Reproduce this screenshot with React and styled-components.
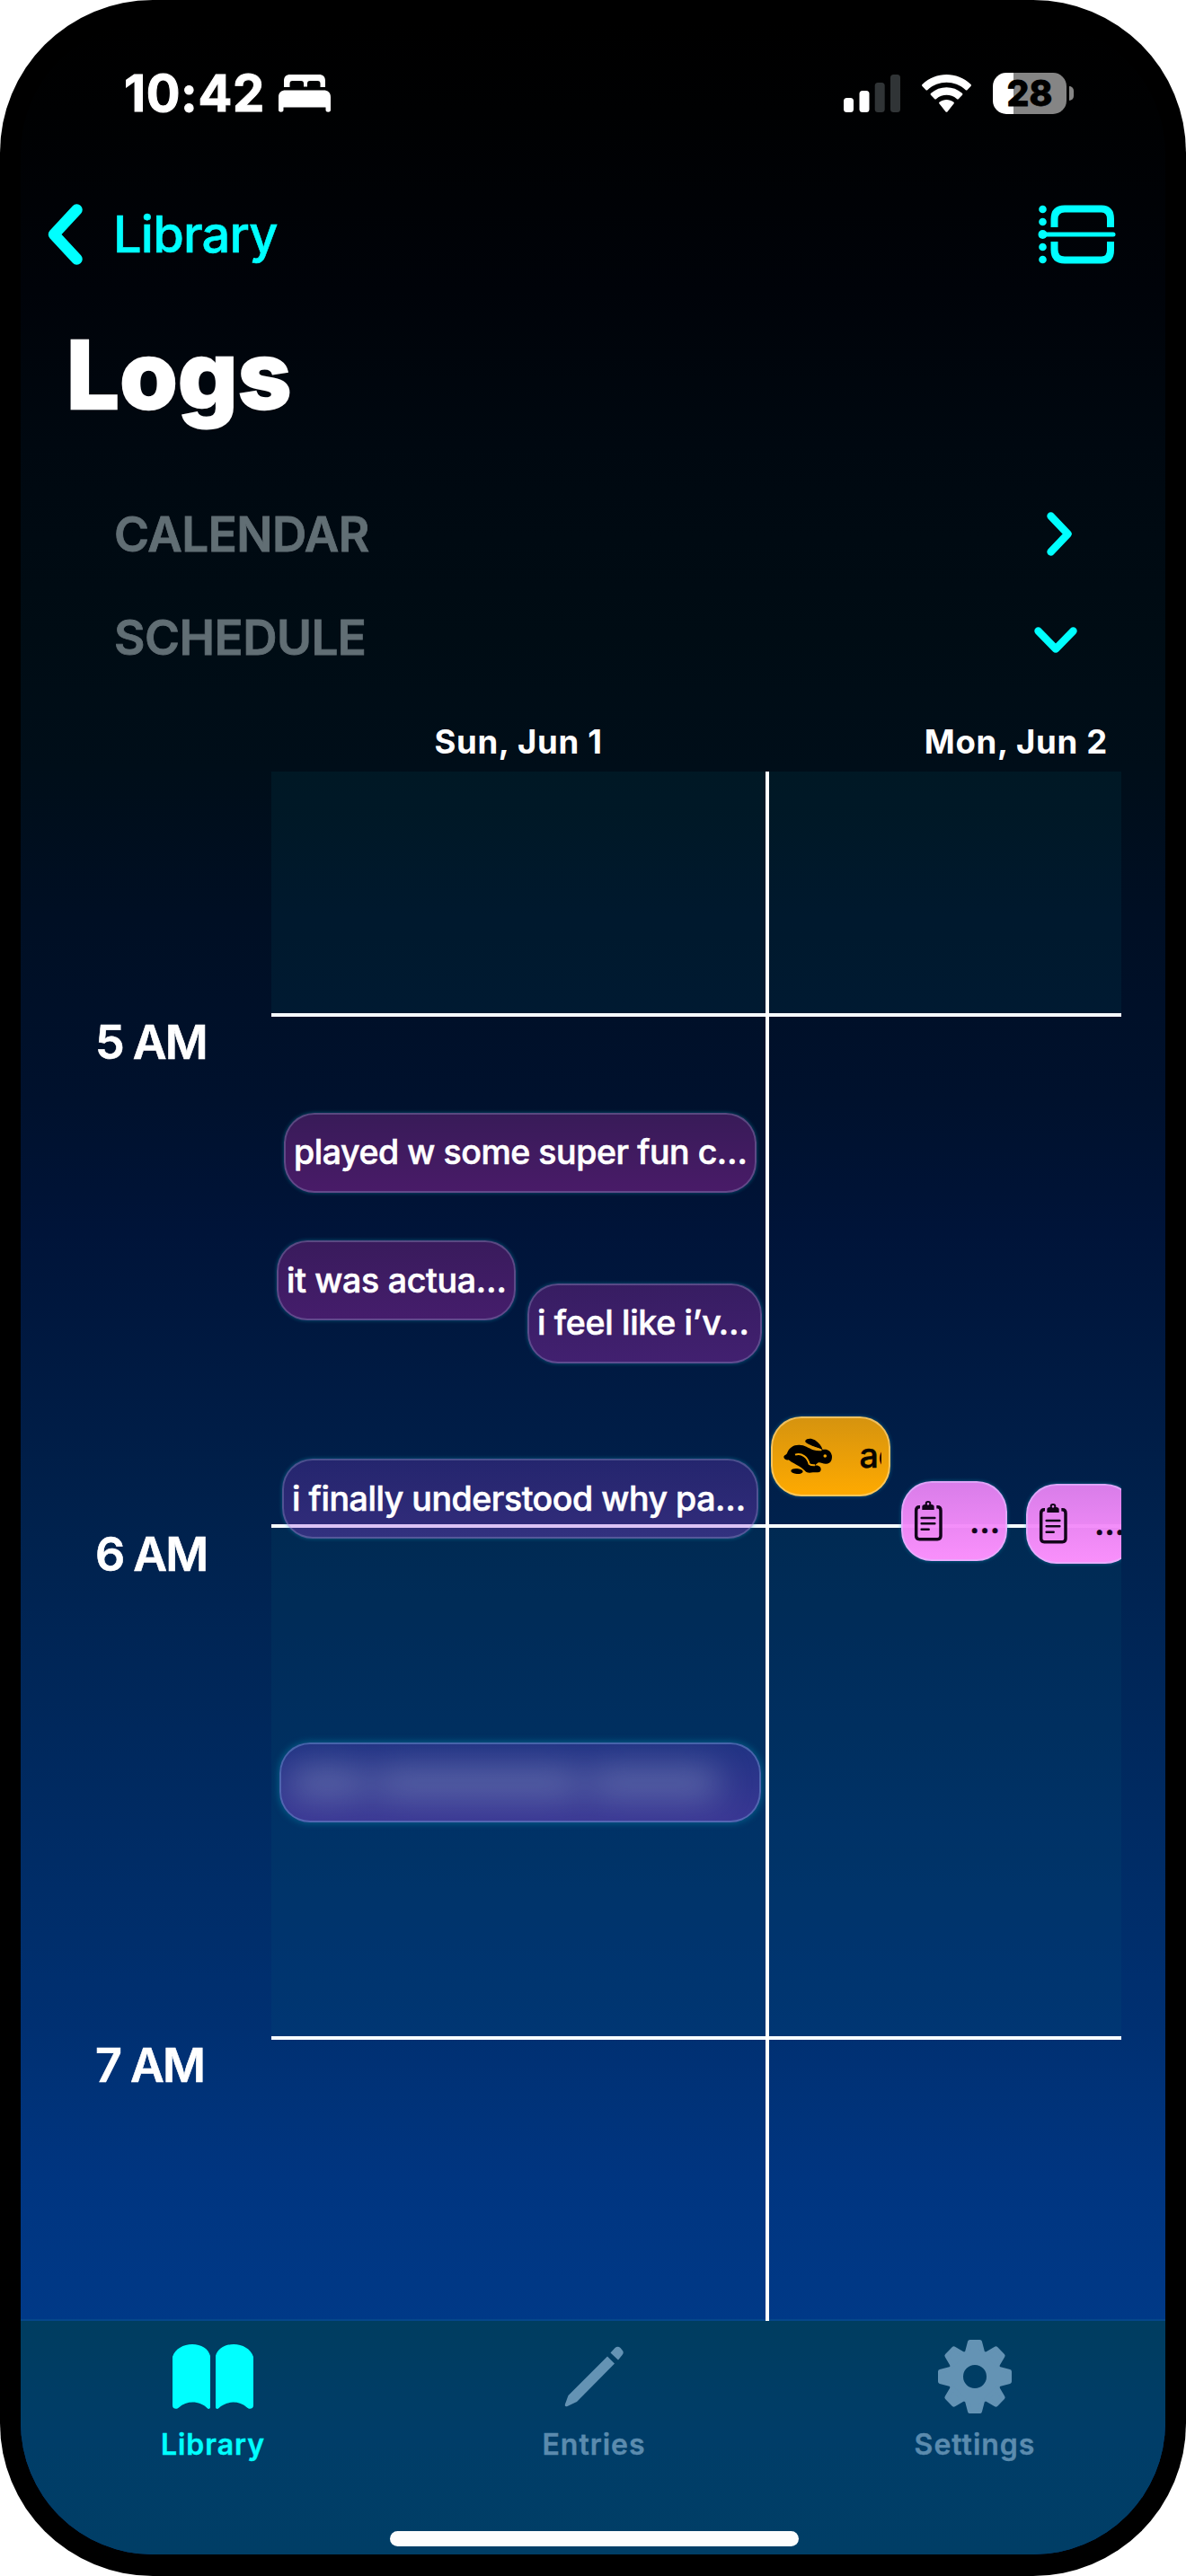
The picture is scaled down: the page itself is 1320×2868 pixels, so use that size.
import React from 'react';
import styled, { createGlobalStyle } from 'styled-components';

const GlobalStyle = createGlobalStyle`
  * { box-sizing: border-box; }
  html, body { margin: 0; padding: 0; background: #fff; }
  body { font-family: Inter, "Liberation Sans", sans-serif; color: #fff; }
  svg { display: block; flex: none; overflow: visible; }
`;

const CYAN = '#00ffff';
const MUTED = '#6493b4';

const Device = styled.div`
  width: 1320px;
  height: 2868px;
  padding: 24px 23px;
  background: #000;
  border-radius: 170px;
  overflow: hidden;
`;

const Screen = styled.div`
  height: 2820px;
  display: flex;
  flex-direction: column;
  overflow: hidden;
  border-radius: 147px;
  background: linear-gradient(
    180deg,
    #000000 0px, #000102 100px, #000309 300px, #000810 470px, #000c14 680px,
    #000e19 830px, #000f24 1000px, #00112d 1200px, #001439 1350px, #001a42 1500px,
    #00224e 1690px, #00285c 1900px, #002d68 2080px, #003072 2240px, #003580 2400px, #003987 2560px
  );
`;

const StatusBar = styled.div`
  height: 160px;
  padding: 0 102px 0 115px;
  display: flex;
  align-items: center;
`;

const Clock = styled.span`
  font-size: 56px;
  font-weight: 700;
  line-height: 68px;
  letter-spacing: 0.6px;
  -webkit-text-stroke: 1px #fff;
  width: 172px;
`;

const StatusIcons = styled.div`
  margin-left: auto;
  display: flex;
  align-items: center;
  gap: 24px;
`;

const Battery = styled.div`
  display: flex;
  align-items: center;
  gap: 3px;
`;

const BatteryBody = styled.div`
  width: 82px;
  height: 46px;
  border-radius: 15px;
  background: linear-gradient(90deg, #fff 23px, #858585 23px);
  color: #000;
  font-size: 39px;
  font-weight: 800;
  line-height: 46px;
  text-align: center;
  -webkit-text-stroke: 0.8px #000;
`;

const BatteryCap = styled.div`
  width: 5px;
  height: 16px;
  border-radius: 0 6px 6px 0;
  background: #858585;
`;

const NavBar = styled.div`
  height: 153px;
  padding: 0 55px 0 30px;
  display: flex;
  align-items: center;
  justify-content: space-between;
`;

const BackLink = styled.div`
  display: flex;
  align-items: center;
  gap: 34px;
  color: ${CYAN};
  font-size: 56px;
  font-weight: 500;
  line-height: 68px;
  letter-spacing: -0.8px;
  -webkit-text-stroke: 0.6px ${CYAN};
`;

const Title = styled.h1`
  margin: 0;
  height: 200px;
  padding: 17px 0 0 51px;
  font-size: 104px;
  font-weight: 800;
  line-height: 126px;
  letter-spacing: 0.4px;
  -webkit-text-stroke: 2.5px #fff;
`;

const SectionRow = styled.div`
  height: 115px;
  padding: 0 ${(p) => p.$right}px 0 104px;
  display: flex;
  align-items: center;
  justify-content: space-between;
  color: #616e74;
  font-size: 53px;
  font-weight: 600;
  line-height: 64px;
  letter-spacing: -0.5px;
  -webkit-text-stroke: 0.8px #616e74;
`;

const DayHeader = styled.div`
  height: 92px;
  padding: 0 49px 11px 279px;
  display: flex;
  align-items: flex-end;
`;

const Day = styled.div`
  width: ${(p) => p.$width}px;
  text-align: ${(p) => p.$align};
  padding-right: ${(p) => p.$pad || 0}px;
  font-size: 36.5px;
  font-weight: 700;
  line-height: 44px;
  letter-spacing: 0.7px;
`;

const Schedule = styled.div`
  height: 1723px;
  display: flex;
`;

const Hours = styled.div`
  width: 279px;
  padding: 271px 0 0 83px;
  overflow: hidden;
`;

const HourLabel = styled.div`
  height: 569.5px;
  font-size: 52px;
  font-weight: 600;
  line-height: 62px;
  letter-spacing: -2px;
  -webkit-text-stroke: 0.6px #fff;
`;

const Canvas = styled.div`
  position: relative;
  width: 946px;
  height: 1725px;
  overflow: hidden;
`;

const HourBlock = styled.div`
  height: ${(p) => p.$height}px;
  border-bottom: ${(p) => (p.$last ? 0 : 4)}px solid #f6fbff;
  background: ${(p) => (p.$tint ? 'rgba(0, 108, 130, 0.11)' : 'transparent')};
`;

const DayDivider = styled.div`
  position: absolute;
  left: 550px;
  top: 0;
  width: 4px;
  height: 100%;
  background: #fff;
`;

const Event = styled.div`
  position: absolute;
  left: ${(p) => p.$x}px;
  top: ${(p) => p.$y}px;
  width: ${(p) => p.$w}px;
  height: 89px;
  padding-left: ${(p) => p.$pad || 9}px;
  display: flex;
  align-items: center;
  border: 2px solid ${(p) => p.$edge || 'rgba(160, 170, 210, 0.32)'};
  border-radius: 34px;
  background: linear-gradient(180deg, ${(p) => p.$from}, ${(p) => p.$to});
  background-origin: border-box;
  box-shadow: 0 0 ${(p) => p.$glow || 4}px rgba(0, 170, 200, 0.45);
  overflow: hidden;
  white-space: nowrap;
  color: ${(p) => p.$ink || '#fff'};
  font-size: 37.5px;
  font-weight: 500;
  line-height: 46px;
  letter-spacing: ${(p) => p.$track || -0.3}px;
  -webkit-text-stroke: 0.6px ${(p) => p.$ink || '#fff'};
`;

const Clip = styled.span`
  margin-left: ${(p) => p.$gap}px;
  width: ${(p) => p.$w}px;
  overflow: hidden;
`;

const Redacted = styled.div`
  display: flex;
  gap: 12px;
  padding-left: 6px;
  filter: blur(19px);
  opacity: 0.34;
`;

const Smear = styled.div`
  width: ${(p) => p.$w}px;
  height: 36px;
  background: #b9c8e0;
`;

const TabBar = styled.div`
  flex: 1;
  border-top: 2px solid #05478b;
  background: linear-gradient(180deg, #003d60, #003d68 50%, #003e66);
`;

const Tabs = styled.div`
  height: 234px;
  padding: 18px 0 0 2px;
  display: grid;
  grid-template-columns: repeat(3, 1fr);
`;

const Tab = styled.div`
  display: flex;
  flex-direction: column;
  align-items: center;
  gap: 12px;
  color: ${(p) => (p.$active ? CYAN : '#5b8bae')};
  font-size: 32px;
  font-weight: 600;
  line-height: 40px;
  letter-spacing: 1px;
  -webkit-text-stroke: 0.4px ${(p) => (p.$active ? CYAN : '#5b8bae')};
`;

const IconBox = styled.div`
  height: 88px;
  display: flex;
  align-items: center;
  color: ${(p) => (p.$active ? CYAN : MUTED)};
`;

const HomeIndicator = styled.div`
  width: 455px;
  height: 17px;
  margin-left: 411px;
  border-radius: 9px;
  background: #fdfdfd;
`;

const BedIcon = () => (
  <svg width="58" height="42" viewBox="0 0 58 42" fill="#fff">
    <path d="M6 14V7C6 2.5 8.500 0 13 0H45C49.500 0 52 2.500 52 7V14H46.500V10C46.500 8 45.500 7 43.500 7H35C33 7 32 8 32 10V13.500H28V10C28 8 27 7 25 7H15.500C13.500 7 12.500 8 12.500 10V14Z" />
    <path d="M0 25C0 20 3 17.500 8 17.500H50C55 17.500 58 20 58 25V39.500C58 42.500 52.500 42.500 52.500 39.500V36.500H5.500V39.500C5.500 42.500 0 42.500 0 39.500Z" />
  </svg>
);

const SignalIcon = () => (
  <svg width="63" height="42" viewBox="0 0 63 42">
    <rect x="0" y="26" width="11" height="16" rx="3.500" fill="#fff" />
    <rect x="17.500" y="18" width="11" height="24" rx="3.500" fill="#fff" />
    <rect x="34.700" y="9" width="11" height="33" rx="3.500" fill="#303436" />
    <rect x="52" y="0" width="11" height="42" rx="3.500" fill="#303436" />
  </svg>
);

const WifiIcon = () => (
  <svg width="55" height="42" viewBox="0 0 55 42" fill="#fff">
    <path d="M0.700 13.200C-0.200 12.300 -0.200 11.500 0.700 10.700C15.500 -3.600 39.500 -3.600 54.300 10.700C55.200 11.500 55.200 12.300 54.300 13.200L50.700 16.900C50 17.600 49.200 17.600 48.500 16.900C36.500 6 18.500 6 6.500 16.900C5.800 17.600 5 17.600 4.300 16.900Z" />
    <path d="M10.200 23C9.400 22.200 9.400 21.400 10.200 20.700C20 12.100 35 12.100 44.800 20.700C45.600 21.400 45.600 22.200 44.800 23L41 26.900C40.300 27.600 39.500 27.600 38.800 26.900C32.200 21.400 22.800 21.400 16.200 26.900C15.500 27.600 14.700 27.600 14 26.900Z" />
    <path d="M19.700 32.800C18.900 32 18.900 31.200 19.800 30.500C24.300 27 30.700 27 35.200 30.500C36.100 31.200 36.100 32 35.300 32.800L28.600 41.200C27.900 42 27.100 42 26.400 41.200Z" />
  </svg>
);

const BackChevron = () => (
  <svg width="39" height="68" viewBox="0 0 39 68" fill="none" stroke={CYAN} strokeWidth="12.500" strokeLinecap="round" strokeLinejoin="round">
    <path d="M32.500 6.500L7 34L32.500 61.500" />
  </svg>
);

const TimelineIcon = () => (
  <svg width="86" height="66" viewBox="0 0 86 66" fill="none" stroke={CYAN}>
    <path d="M17.500 25V16Q17.500 4.500 29 4.500H70Q80 4.500 80 16V25M17.500 41V50Q17.500 61.500 29 61.500H70Q80 61.500 80 50V41" strokeWidth="8" />
    <path d="M5 33H83" strokeWidth="5" strokeLinecap="round" />
    <g fill={CYAN} stroke="none">
      <circle cx="4.500" cy="5" r="4.300" />
      <circle cx="4.500" cy="19" r="4.300" />
      <circle cx="4.500" cy="33" r="5" />
      <circle cx="4.500" cy="47" r="4.300" />
      <circle cx="4.500" cy="61" r="4.300" />
    </g>
  </svg>
);

const ChevronRight = () => (
  <svg width="28" height="49" viewBox="0 0 28 49" fill="none" stroke={CYAN} strokeWidth="8.400" strokeLinecap="round" strokeLinejoin="round">
    <path d="M4.500 4.500L23.500 24.500L4.500 44.500" />
  </svg>
);

const ChevronDown = () => (
  <svg width="48" height="29" viewBox="0 -4 48 29" fill="none" stroke={CYAN} strokeWidth="8.400" strokeLinecap="round" strokeLinejoin="round">
    <path d="M4.500 3.500L24 23.500L43.500 3.500" />
  </svg>
);

const RabbitIcon = () => (
  <svg width="54.600" height="40" viewBox="157 181 164 120">
    <path d="M158 245C158 238 166 238 169 232C175 214 190 204 208 204C226 203 240 214 256 221C266 224 278 225 286 223C280 214 262 212 250 206C238 200 228 196 230 190C234 182 250 180 262 188C276 198 284 208 288 220C302 216 316 224 319 240C320 254 316 266 300 267C290 268 282 262 274 263C270 266 264 270 262 273C274 270 284 278 282 288C280 298 268 296 256 296C244 298 236 299 228 290C220 282 212 276 200 270C188 264 178 258 174 254C168 256 158 252 158 245Z" />
    <ellipse cx="202" cy="292" rx="20" ry="9" transform="rotate(5 202 292)" />
    <path d="M196 237C218 229 238 246 243 268C250 273 256 272 262 272" fill="none" stroke="#f2a303" strokeWidth="6" />
    <path d="M240 207L284 221" fill="none" stroke="#e39d0a" strokeWidth="5" />
    <circle cx="296" cy="241" r="5.500" fill="#f2a303" />
  </svg>
);

const ClipboardIcon = () => (
  <svg width="31" height="45" viewBox="593 396 93 135" fill="none" stroke="#12041a">
    <path d="M611 416H609Q598 416 598 428V513Q598 524 609 524H669Q680 524 680 513V428Q680 416 669 416H666" strokeWidth="10.500" />
    <path d="M618 426V416Q618 408 628 408H648Q658 408 658 416V426Z" fill="#12041a" stroke="none" />
    <circle cx="638" cy="406" r="7" strokeWidth="6" fill="#e58af0" />
    <path d="M616 453H660M616 472H660M616 491H640" strokeWidth="7.500" strokeLinecap="round" />
  </svg>
);

const BookIcon = () => (
  <svg width="90" height="72" viewBox="0 0 90 72" fill="currentColor">
    <path d="M0 14C3 5 12 0 22 0C32 0 40 5 42 13V70C42 72 40 72.500 39 71.500C30 62.500 16 62.500 7 70.500C4.500 73 0 72 0 68Z" />
    <path d="M90 14C87 5 78 0 68 0C58 0 50 5 48 13V70C48 72 50 72.500 51 71.500C60 62.500 74 62.500 83 70.500C85.500 73 90 72 90 68Z" />
  </svg>
);

const PencilIcon = () => (
  <svg width="66" height="68" viewBox="0 0 66 68" fill="currentColor">
    <path d="M48 11.500L56 19.500L14 62L3.500 67Q0 68 1 64.500L4.500 55Z" />
    <path d="M51.500 7.500L56.500 2Q59.500 -0.500 62.500 2L64.500 4.500Q67 7 64.500 10L60 15.500Z" />
  </svg>
);

const GEAR_ANGLES = [0, 45, 90, 135, 180, 225, 270, 315];

const GearIcon = () => (
  <svg width="82" height="82" viewBox="-41 -41 82 82" fill="currentColor" stroke="currentColor" strokeLinejoin="round">
    <circle r="21.500" fill="none" strokeWidth="17" />
    {GEAR_ANGLES.map((a) => (
      <path key={a} d="M-8.500 -27L-5.500 -38.500H5.500L8.500 -27Z" strokeWidth="5" transform={`rotate(${a})`} />
    ))}
  </svg>
);

export default function App() {
  return (
    <>
      <GlobalStyle />
      <Device>
        <Screen>
          <StatusBar>
            <Clock>10:42</Clock>
            <BedIcon />
            <StatusIcons>
              <SignalIcon />
              <WifiIcon />
              <Battery>
                <BatteryBody>28</BatteryBody>
                <BatteryCap />
              </Battery>
            </StatusIcons>
          </StatusBar>

          <NavBar>
            <BackLink>
              <BackChevron />
              Library
            </BackLink>
            <TimelineIcon />
          </NavBar>

          <Title>Logs</Title>

          <SectionRow $right={104}>
            CALENDAR
            <ChevronRight />
          </SectionRow>
          <SectionRow $right={98}>
            SCHEDULE
            <ChevronDown />
          </SectionRow>

          <DayHeader>
            <Day $width={550} $align="center">Sun, Jun 1</Day>
            <Day $width={396} $align="right" $pad={15}>Mon, Jun 2</Day>
          </DayHeader>

          <Schedule>
            <Hours>
              <HourLabel>5 AM</HourLabel>
              <HourLabel>6 AM</HourLabel>
              <HourLabel>7 AM</HourLabel>
            </Hours>
            <Canvas>
              <HourBlock $height={272.5} $tint />
              <HourBlock $height={569.5} />
              <HourBlock $height={569.5} $tint />
              <HourBlock $height={314} $last />

              <Event $x={14} $y={379.5} $w={526} $from="#381b58" $to="#491b68" $track={-0.45}>played w some super fun c…</Event>
              <Event $x={6} $y={522} $w={266} $from="#391b5c" $to="#451d6c">it was actua…</Event>
              <Event $x={285} $y={569.5} $w={261} $from="#371d62" $to="#422070">i feel like i’v…</Event>
              <Event $x={12} $y={765} $w={530} $from="rgba(120, 57, 197, 0.3)" $to="rgba(167, 67, 230, 0.3)" $track={-0.45}>i finally understood why pa…</Event>
              <Event $x={9} $y={1081} $w={536} $pad={4} $from="#203383" $to="#3a3794" $edge="rgba(110, 150, 210, 0.5)" $glow={8}>
                <Redacted>
                  <Smear $w={84} />
                  <Smear $w={226} />
                  <Smear $w={142} />
                </Redacted>
              </Event>

              <Event $x={556} $y={717.5} $w={133} $pad={12} $from="#d5930f" $to="#ffaa00" $edge="rgba(255, 220, 150, 0.6)" $ink="#080400">
                <RabbitIcon />
                <Clip $gap={30} $w={24}>ac</Clip>
              </Event>
              <Event $x={701} $y={790} $w={118} $pad={13} $from="rgba(228, 130, 242, 0.95)" $to="rgba(255, 146, 255, 0.98)" $edge="rgba(225, 190, 255, 0.6)" $ink="#12041a">
                <ClipboardIcon />
                <Clip $gap={30} $w={40}>…</Clip>
              </Event>
              <Event $x={840} $y={792.5} $w={122} $pad={13} $from="rgba(228, 130, 242, 0.95)" $to="rgba(255, 146, 255, 0.98)" $edge="rgba(225, 190, 255, 0.6)" $ink="#12041a">
                <ClipboardIcon />
                <Clip $gap={30} $w={40}>…</Clip>
              </Event>
              <DayDivider />
            </Canvas>
          </Schedule>

          <TabBar>
            <Tabs>
              <Tab $active>
                <IconBox $active><BookIcon /></IconBox>
                Library
              </Tab>
              <Tab>
                <IconBox><PencilIcon /></IconBox>
                Entries
              </Tab>
              <Tab>
                <IconBox><GearIcon /></IconBox>
                Settings
              </Tab>
            </Tabs>
            <HomeIndicator />
          </TabBar>
        </Screen>
      </Device>
    </>
  );
}
